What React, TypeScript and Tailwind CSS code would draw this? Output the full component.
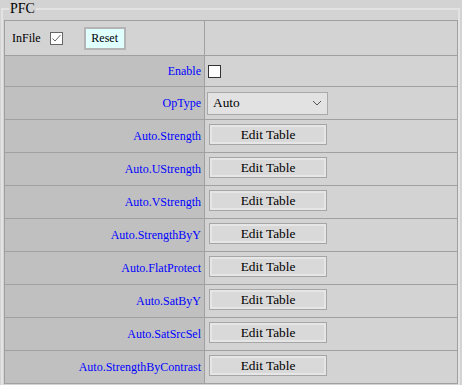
const rows = [
  "Auto.Strength",
  "Auto.UStrength",
  "Auto.VStrength",
  "Auto.StrengthByY",
  "Auto.FlatProtect",
  "Auto.SatByY",
  "Auto.SatSrcSel",
  "Auto.StrengthByContrast",
];

const Label = ({ text }: { text: string }) => (
  <div className="w-[200px] shrink-0 flex items-center justify-end pr-[3px] bg-[#c0c0c0] border-r border-[#a0a0a0] text-[12px] text-[#0000ff]">
    {text}
  </div>
);

const EditButton = () => (
  <button className="w-[118px] h-[21px] border border-[#a6a6a6] bg-[#d9d9d9] shadow-[inset_0_0_0_2px_#e6e6e6] font-['Liberation_Serif'] font-normal text-[13.33px] leading-none text-black">
    Edit Table
  </button>
);

export default function App() {
  return (
    <div className="w-[462px] h-[385px] overflow-hidden bg-[#d3d3d3] font-['Liberation_Serif'] font-normal text-black">
      <fieldset className="ml-px w-[459px] border-2 border-[#e3e3e3] pl-px pb-2">
        <legend className="ml-[5px] px-px text-[14px] leading-[18px]">PFC</legend>

        <div className="mt-[2px] w-[454px] border-t border-l border-r border-[#a0a0a0]">
          {/* InFile row */}
          <div className="flex h-[35px] border-b border-[#a0a0a0]">
            <div className="w-[200px] shrink-0 flex items-center pl-[7px] border-r border-[#a0a0a0] text-[12px]">
              <span>InFile</span>
              <span className="ml-[9px] w-[13px] h-[13px] bg-white border border-[#666] flex items-center justify-center">
                <svg width="11" height="11" viewBox="0 0 11 11">
                  <path d="M1.5 5.5 L4 8 L9.5 2" fill="none" stroke="#666" strokeWidth="1" />
                </svg>
              </span>
              <button className="ml-[21px] w-[42px] h-[23px] border-2 border-[#b4b4b4] bg-[#e0ffff] font-['Liberation_Serif'] text-[12px] leading-none">
                Reset
              </button>
            </div>
            <div className="flex-1" />
          </div>

          {/* Enable row */}
          <div className="flex h-[31px] border-b border-[#a0a0a0]">
            <Label text="Enable" />
            <div className="flex-1 flex items-center pl-[3px]">
              <span className="w-[13px] h-[13px] bg-white border border-[#333]" />
            </div>
          </div>

          {/* OpType row */}
          <div className="flex h-[33px] border-b border-[#a0a0a0]">
            <Label text="OpType" />
            <div className="flex-1 flex items-center pl-[2px]">
              <div className="w-[121px] h-[23px] flex items-center justify-between pl-[5px] pr-[5px] bg-[#e2e2e2] border border-[#a9a9a9] text-[13.33px]">
                <span>Auto</span>
                <svg width="10" height="6" viewBox="0 0 10 6">
                  <path d="M1 1 L5 5 L9 1" fill="none" stroke="#555" strokeWidth="1" />
                </svg>
              </div>
            </div>
          </div>

          {rows.map((r) => (
            <div key={r} className="flex h-[33px] border-b border-[#a0a0a0]">
              <Label text={r} />
              <div className="flex-1 flex items-center pl-[4px] pb-[3px]">
                <EditButton />
              </div>
            </div>
          ))}
        </div>
      </fieldset>
    </div>
  );
}
